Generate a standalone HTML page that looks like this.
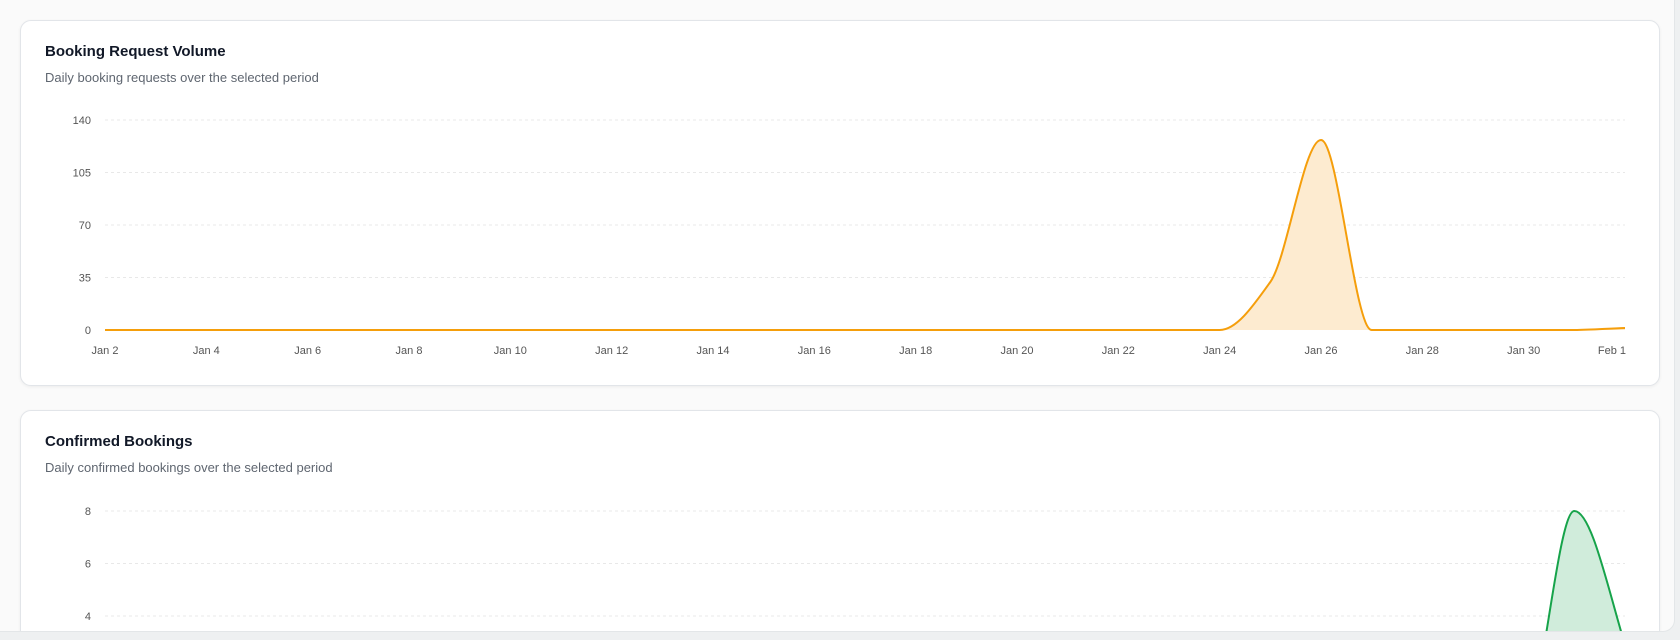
<!DOCTYPE html>
<html><head><meta charset="utf-8"><style>
html,body{margin:0;padding:0;width:1680px;height:640px;overflow:hidden;background:#eef0f1;font-family:"Liberation Sans",Arial,sans-serif}
.wrap{position:absolute;left:0;top:0;width:1674px;height:631px;background:#fafafa;border:1px solid #e3e6e8;border-top:none;border-left:none;border-radius:0 0 12px 0;overflow:hidden}
.card{position:absolute;left:20px;width:1638px;background:#fff;border:1px solid #e2e5e9;border-radius:11px;box-shadow:0 1px 3px rgba(0,0,0,0.06)}
.t{position:absolute;left:24px;font-size:15px;font-weight:bold;color:#111827}
.s{position:absolute;left:24px;font-size:13px;color:#5f6670}
svg{position:absolute;left:0;top:0}
svg text{font-family:"Liberation Sans",Arial,sans-serif;font-size:11px;fill:#555}
</style></head><body>
<div class="wrap">
<div class="card" style="top:20px;height:364px">
<div class="t" style="top:22px">Booking Request Volume</div>
<div class="s" style="top:49px">Daily booking requests over the selected period</div>
</div>
<div class="card" style="top:410px;height:240px">
<div class="t" style="top:22px">Confirmed Bookings</div>
<div class="s" style="top:49px">Daily confirmed bookings over the selected period</div>
</div>
<svg width="1674" height="631">
<g stroke="#e8e8e8" stroke-dasharray="3 3" stroke-width="1">
<line x1="105" x2="1625" y1="120" y2="120"/><line x1="105" x2="1625" y1="172.5" y2="172.5"/><line x1="105" x2="1625" y1="225" y2="225"/><line x1="105" x2="1625" y1="277.5" y2="277.5"/>
<line x1="105" x2="1625" y1="511" y2="511"/><line x1="105" x2="1625" y1="563.5" y2="563.5"/><line x1="105" x2="1625" y1="616" y2="616"/>
</g>
<g text-anchor="end">
<text x="91" y="124">140</text><text x="91" y="176.5">105</text><text x="91" y="229">70</text><text x="91" y="281.5">35</text><text x="91" y="334">0</text>
<text x="91" y="515">8</text><text x="91" y="567.5">6</text><text x="91" y="620">4</text>
</g>
<g text-anchor="middle">
<text x="105" y="354">Jan 2</text><text x="206.3" y="354">Jan 4</text><text x="307.7" y="354">Jan 6</text><text x="409" y="354">Jan 8</text><text x="510.3" y="354">Jan 10</text><text x="611.7" y="354">Jan 12</text><text x="713" y="354">Jan 14</text><text x="814.3" y="354">Jan 16</text><text x="915.7" y="354">Jan 18</text><text x="1017" y="354">Jan 20</text><text x="1118.3" y="354">Jan 22</text><text x="1219.7" y="354">Jan 24</text><text x="1321" y="354">Jan 26</text><text x="1422.3" y="354">Jan 28</text><text x="1523.7" y="354">Jan 30</text><text x="1612" y="354">Feb 1</text>
</g>
<path d="M105,330 L1219.7,330 C1236.6,330 1253.4,305.7 1270.3,282 C1287.2,258.3 1304.1,140 1321,140 C1337.9,140 1354.8,330 1371.7,330 L1574.3,330 C1591.2,330 1608.1,328.5 1625,328 L1625,330 Z" fill="#fdebd0"/>
<path d="M105,330 L1219.7,330 C1236.6,330 1253.4,305.7 1270.3,282 C1287.2,258.3 1304.1,140 1321,140 C1337.9,140 1354.8,330 1371.7,330 L1574.3,330 C1591.2,330 1608.1,328.5 1625,328" fill="none" stroke="#f59e0b" stroke-width="2"/>
<path d="M1523.7,721 C1540.6,721 1557.4,511 1574.3,511 C1591.2,511 1607,585 1625,645 L1625,721 Z" fill="#d0ecdb"/>
<path d="M1523.7,721 C1540.6,721 1557.4,511 1574.3,511 C1591.2,511 1607,585 1625,645" fill="none" stroke="#16a34a" stroke-width="2"/>
</svg>
</div>
</body></html>
